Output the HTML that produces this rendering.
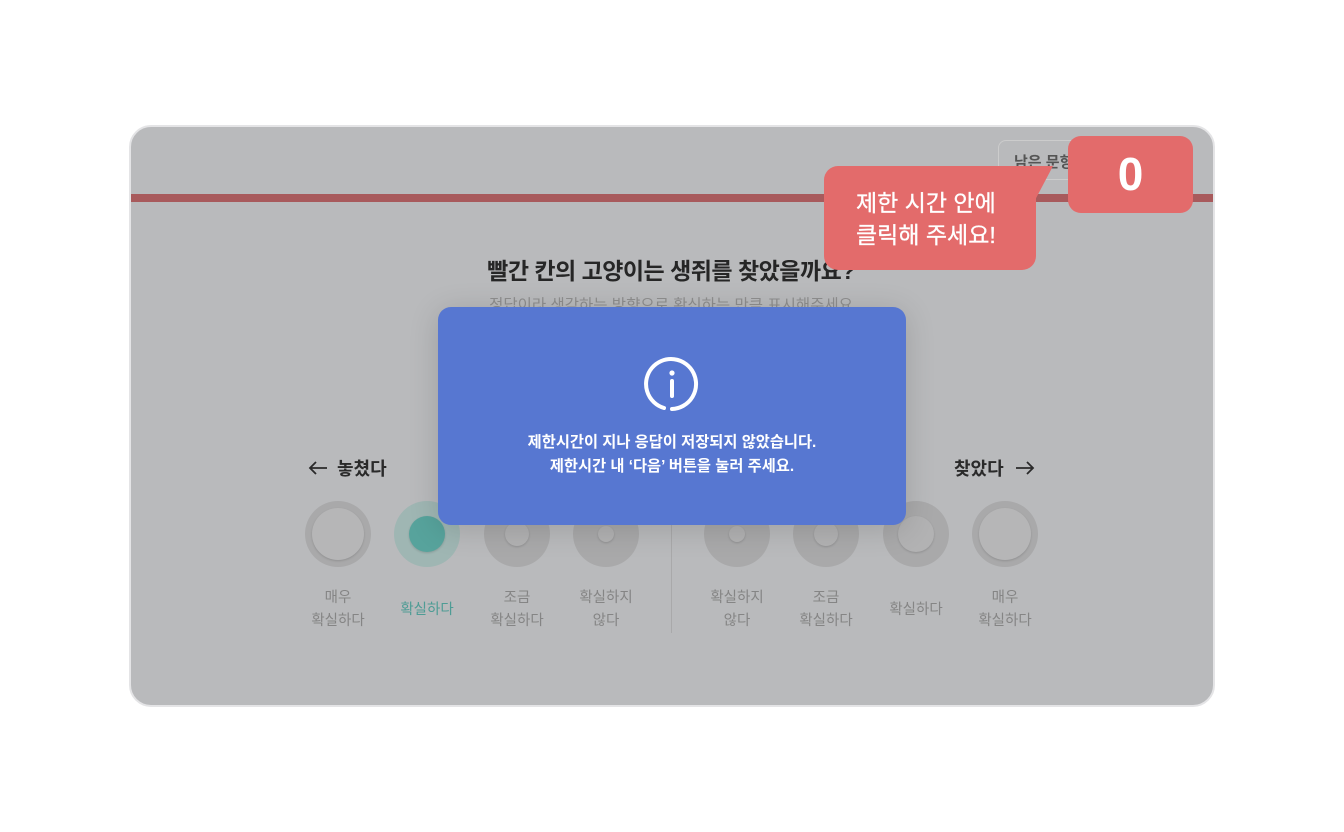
<!DOCTYPE html>
<html><head><meta charset="utf-8"><style>
*{margin:0;padding:0;box-sizing:border-box}
body{width:1344px;height:832px;background:#fff;font-family:"Liberation Sans","Noto Sans CJK KR",sans-serif;position:relative;overflow:hidden}
.card{position:absolute;left:129px;top:125px;width:1086px;height:582px;border-radius:22px;background:#b9babc;border:2px solid #e4e4e6;overflow:hidden}
.bar{position:absolute;left:0;top:67px;width:100%;height:8px;background:#a85a5c}
.abs{position:absolute}
.title{left:-2px;width:1084px;top:125px;text-align:center;font-size:23px;font-weight:bold;color:#262626;letter-spacing:-0.5px}
.sub{left:-2px;width:1084px;top:166px;text-align:center;font-size:15.5px;color:#8e8e8e}
.circ{position:absolute;width:66px;height:66px;border-radius:50%;background:#a9a9aa;top:374px}
.circ i{position:absolute;border-radius:50%;background:#b2b2b3;left:50%;top:50%;transform:translate(-50%,-50%);box-shadow:0 1px 2px rgba(0,0,0,.15)}
.lab{position:absolute;top:460px;width:100px;text-align:center;font-size:14.5px;line-height:23px;color:#858585}
.side{position:absolute;top:328px;font-size:18px;font-weight:bold;color:#2a2a2a}
.dlg{position:absolute;left:438px;top:307px;width:468px;height:218px;background:#5777d1;border-radius:13px;color:#fff;text-align:center;box-shadow:0 4px 30px rgba(0,0,0,.15)}
.dlg p{font-size:15.3px;font-weight:bold;line-height:24px}
</style></head><body>
<div class="card">
 <div class="abs" style="left:867px;top:13px;width:90px;height:40px;border:1px solid #ccc;border-radius:8px;font-size:15px;font-weight:bold;color:#555;padding:10px 0 0 15px">남은 문항</div>
 <div class="bar"></div>
 <div class="abs title">빨간 칸의 고양이는 생쥐를 찾았을까요?</div>
 <div class="abs sub">정답이라 생각하는 방향으로 확신하는 만큼 표시해주세요</div>
 <div class="side" style="left:176px">
  <svg width="22" height="16" viewBox="0 0 22 16" style="vertical-align:-1px;margin-right:8px"><path d="M20 8H3M9 2L3 8l6 6" stroke="#2a2a2a" stroke-width="1.8" fill="none"/></svg>놓쳤다</div>
 <div class="side" style="left:823px">찾았다<svg width="22" height="16" viewBox="0 0 22 16" style="vertical-align:-1px;margin-left:10px"><path d="M2 8h17M13 2l6 6-6 6" stroke="#2a2a2a" stroke-width="1.8" fill="none"/></svg></div>
 <div class="circ" style="left:174px"><i style="width:52px;height:52px;background:#b6b6b7"></i></div>
 <div class="circ" style="left:263px;background:#9fb6b3"><i style="width:36px;height:36px;background:#57a39c"></i></div>
 <div class="circ" style="left:353px"><i style="width:24px;height:24px"></i></div>
 <div class="circ" style="left:442px"><i style="width:16px;height:16px"></i></div>
 <div class="abs" style="left:540px;top:393px;width:1px;height:113px;background:#a9a9aa"></div>
 <div class="circ" style="left:573px"><i style="width:16px;height:16px"></i></div>
 <div class="circ" style="left:662px"><i style="width:24px;height:24px"></i></div>
 <div class="circ" style="left:752px"><i style="width:36px;height:36px"></i></div>
 <div class="circ" style="left:841px"><i style="width:52px;height:52px;background:#b6b6b7"></i></div>
 <div class="lab" style="left:157px">매우<br>확실하다</div>
 <div class="lab" style="left:246px;top:472px;color:#4e9c95">확실하다</div>
 <div class="lab" style="left:336px">조금<br>확실하다</div>
 <div class="lab" style="left:425px">확실하지<br>않다</div>
 <div class="lab" style="left:556px">확실하지<br>않다</div>
 <div class="lab" style="left:645px">조금<br>확실하다</div>
 <div class="lab" style="left:735px;top:472px">확실하다</div>
 <div class="lab" style="left:824px">매우<br>확실하다</div>
</div>
<div class="dlg">
 <svg width="60" height="60" viewBox="0 0 60 60" style="position:absolute;left:204px;top:47px">
  <path d="M22 54 A25 25 0 1 1 30 55" stroke="#fff" stroke-width="4" fill="none" stroke-linecap="round"/>
  <circle cx="30" cy="19" r="2.6" fill="#fff"/>
  <path d="M30 27v15" stroke="#fff" stroke-width="4" stroke-linecap="round"/>
 </svg>
 <p style="padding-top:124px">제한시간이 지나 응답이 저장되지 않았습니다.<br>제한시간 내 ‘다음’ 버튼을 눌러 주세요.</p>
</div>
<div class="abs" style="left:824px;top:166px;width:212px;height:104px;background:#e36b6b;border-radius:14px;color:#fff;font-size:23px;line-height:32px;padding:21px 0 0 32px;-webkit-text-stroke:0.3px #fff">제한 시간 안에<br>클릭해 주세요!</div>
<svg class="abs" style="left:1000px;top:166px" width="60" height="40"><path d="M10 0 L53 0 L34 36 L10 36Z" fill="#e36b6b"/></svg>
<div class="abs" style="left:1068px;top:136px;width:125px;height:77px;background:#e36b6b;border-radius:13px;color:#fff;font-size:46px;font-weight:bold;text-align:center;line-height:77px">0</div>
</body></html>
